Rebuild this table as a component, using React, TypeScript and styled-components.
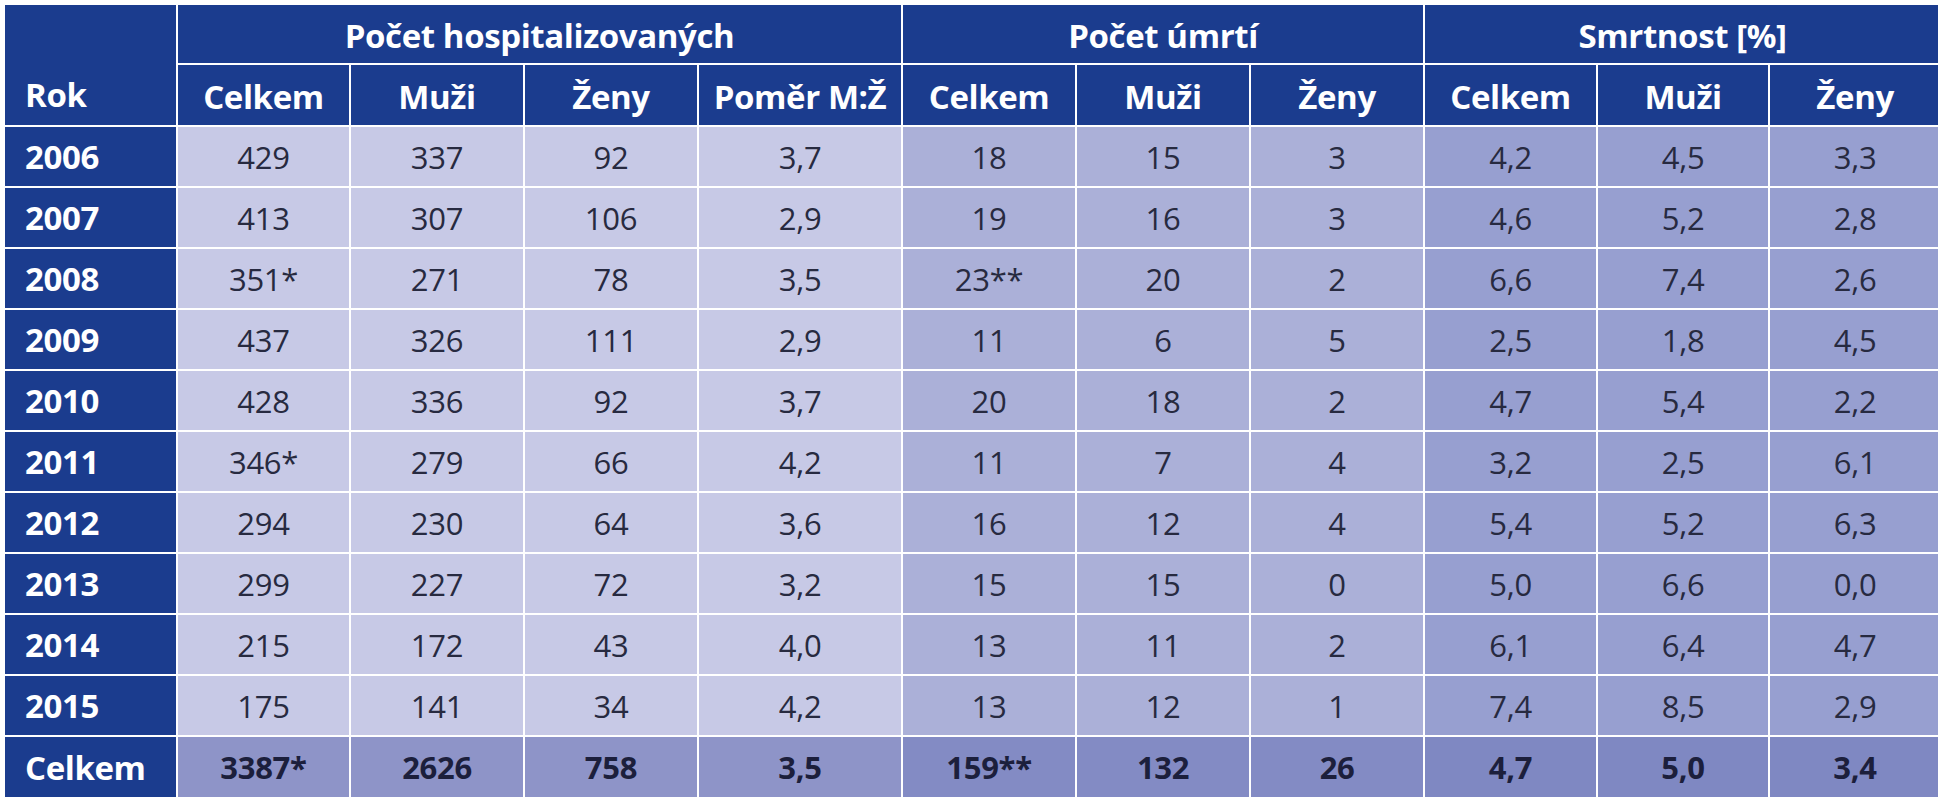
import React from 'react';
import styled, { createGlobalStyle } from 'styled-components';

const GlobalStyle = createGlobalStyle`
  html, body {
    margin: 0;
    padding: 0;
    background: #ffffff;
    overflow: hidden;
  }
`;

type Group = 'hosp' | 'umrti' | 'smrt';

const bodyBg: Record<Group, string> = {
  hosp: '#c7c9e6',
  umrti: '#abb0d8',
  smrt: '#979fd0',
};

const totalBg: Record<Group, string> = {
  hosp: '#8e94c8',
  umrti: '#838bc4',
  smrt: '#7f88c2',
};

const Table = styled.table`
  margin: 3px 0 0 3px;
  border-collapse: separate;
  border-spacing: 2px;
  table-layout: fixed;
  width: 1939px;
  font-family: 'Open Sans', 'Liberation Sans', sans-serif;
`;

const HeadCell = styled.th<{ $left?: boolean; $tall?: boolean }>`
  background: #1b3c8e;
  color: #ffffff;
  font-weight: 700;
  font-size: 33px;
  letter-spacing: -0.4px;
  text-align: ${(p) => (p.$left ? 'left' : 'center')};
  padding: ${(p) => (p.$left ? '0 0 8px 20px' : '3px 0 0')};
  vertical-align: ${(p) => (p.$tall ? 'bottom' : 'middle')};
  white-space: nowrap;
`;

const GroupRow = styled.tr`
  height: 58px;
`;

const SubRow = styled.tr`
  height: 60px;
`;

const BodyRow = styled.tr<{ $total?: boolean }>`
  height: ${(p) => (p.$total ? '60px' : '59px')};
`;

const YearCell = styled.td`
  background: #1b3c8e;
  color: #ffffff;
  font-weight: 700;
  font-size: 33px;
  letter-spacing: -0.4px;
  padding: 0 0 0 20px;
`;

const ValueCell = styled.td<{ $group: Group; $total?: boolean }>`
  background: ${(p) => (p.$total ? totalBg[p.$group] : bodyBg[p.$group])};
  color: ${(p) => (p.$total ? '#1c1f3c' : '#272a40')};
  font-weight: ${(p) => (p.$total ? 700 : 400)};
  font-size: 31px;
  letter-spacing: -0.3px;
  text-align: center;
  padding: 0;
`;

const widths = [171, 171, 172, 172, 202, 172, 172, 172, 171, 170, 170];

const groupOf = (i: number): Group => (i < 4 ? 'hosp' : i < 7 ? 'umrti' : 'smrt');

const rows: [string, string[]][] = [
  ['2006', ['429', '337', '92', '3,7', '18', '15', '3', '4,2', '4,5', '3,3']],
  ['2007', ['413', '307', '106', '2,9', '19', '16', '3', '4,6', '5,2', '2,8']],
  ['2008', ['351*', '271', '78', '3,5', '23**', '20', '2', '6,6', '7,4', '2,6']],
  ['2009', ['437', '326', '111', '2,9', '11', '6', '5', '2,5', '1,8', '4,5']],
  ['2010', ['428', '336', '92', '3,7', '20', '18', '2', '4,7', '5,4', '2,2']],
  ['2011', ['346*', '279', '66', '4,2', '11', '7', '4', '3,2', '2,5', '6,1']],
  ['2012', ['294', '230', '64', '3,6', '16', '12', '4', '5,4', '5,2', '6,3']],
  ['2013', ['299', '227', '72', '3,2', '15', '15', '0', '5,0', '6,6', '0,0']],
  ['2014', ['215', '172', '43', '4,0', '13', '11', '2', '6,1', '6,4', '4,7']],
  ['2015', ['175', '141', '34', '4,2', '13', '12', '1', '7,4', '8,5', '2,9']],
];

const total: string[] = ['3387*', '2626', '758', '3,5', '159**', '132', '26', '4,7', '5,0', '3,4'];

const subHeads = ['Celkem', 'Muži', 'Ženy', 'Poměr M:Ž', 'Celkem', 'Muži', 'Ženy', 'Celkem', 'Muži', 'Ženy'];

export default function App() {
  return (
    <>
      <GlobalStyle />
      <Table>
        <colgroup>
          {widths.map((w, i) => (
            <col key={i} style={{ width: w }} />
          ))}
        </colgroup>
        <thead>
          <GroupRow>
            <HeadCell rowSpan={2} $left $tall>
              Rok
            </HeadCell>
            <HeadCell colSpan={4}>Počet hospitalizovaných</HeadCell>
            <HeadCell colSpan={3}>Počet úmrtí</HeadCell>
            <HeadCell colSpan={3}>Smrtnost [%]</HeadCell>
          </GroupRow>
          <SubRow>
            {subHeads.map((h, i) => (
              <HeadCell key={i}>{h}</HeadCell>
            ))}
          </SubRow>
        </thead>
        <tbody>
          {rows.map(([year, vals]) => (
            <BodyRow key={year}>
              <YearCell>{year}</YearCell>
              {vals.map((v, i) => (
                <ValueCell key={i} $group={groupOf(i)}>
                  {v}
                </ValueCell>
              ))}
            </BodyRow>
          ))}
          <BodyRow $total>
            <YearCell>Celkem</YearCell>
            {total.map((v, i) => (
              <ValueCell key={i} $group={groupOf(i)} $total>
                {v}
              </ValueCell>
            ))}
          </BodyRow>
        </tbody>
      </Table>
    </>
  );
}
